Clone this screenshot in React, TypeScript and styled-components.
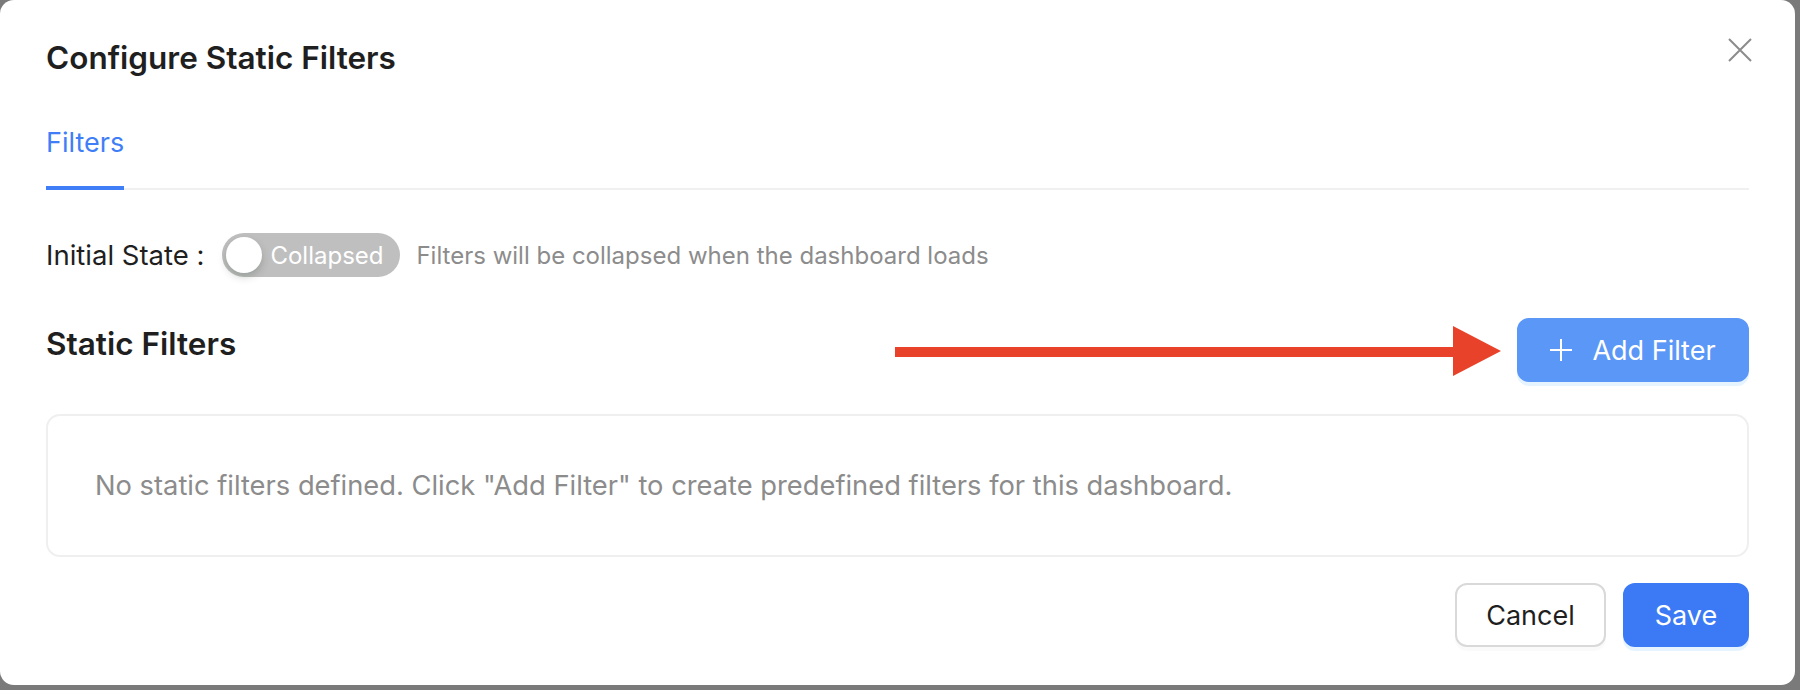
import styled, { createGlobalStyle } from "styled-components";

const GlobalStyle = createGlobalStyle`
  html, body {
    margin: 0;
    padding: 0;
    background: #7a7a7a;
    font-family: Inter, "Noto Sans", "Liberation Sans", sans-serif;
    overflow: hidden;
  }
  * {
    box-sizing: border-box;
  }
`;

const Modal = styled.section`
  position: relative;
  width: 1795px;
  height: 685px;
  background: #fff;
  border-radius: 14px;
  padding: 40px 46px 0 46px;
  display: flex;
  flex-direction: column;
`;

const Header = styled.header`
  display: flex;
  justify-content: space-between;
  align-items: flex-start;
`;

const Title = styled.h1`
  margin: 0;
  font-size: 31.5px;
  line-height: 36px;
  font-weight: 600;
  color: #1f1f1f;
`;

const CloseButton = styled.button`
  border: none;
  background: none;
  padding: 0;
  margin: -2px -3px 0 0;
  width: 24px;
  height: 24px;
  cursor: pointer;
  display: flex;
`;

const TabList = styled.div`
  display: flex;
  margin-top: 50px;
  border-bottom: 2px solid #f0f0f0;
`;

const Tab = styled.div<{ $active?: boolean }>`
  font-size: 27px;
  line-height: 33px;
  padding-bottom: 27px;
  margin-bottom: -2px;
  color: ${(p) => (p.$active ? "#3f7ef6" : "#1f1f1f")};
  border-bottom: 4px solid ${(p) => (p.$active ? "#3f7ef6" : "transparent")};
`;

const StateRow = styled.div`
  display: flex;
  align-items: center;
  margin-top: 43px;
  height: 44px;
`;

const Label = styled.span`
  font-size: 27.5px;
  color: #1f1f1f;
  margin-right: 18px;
  white-space: nowrap;
`;

const Switch = styled.button`
  position: relative;
  width: 178px;
  height: 44px;
  border-radius: 22px;
  border: none;
  background: #bfbfbf;
  padding: 0 18px 0 48px;
  display: flex;
  align-items: center;
  cursor: pointer;
  font-family: inherit;
  font-size: 24px;
  color: #fff;
  margin-right: 16px;
`;

const Knob = styled.span`
  position: absolute;
  left: 4px;
  top: 4px;
  width: 36px;
  height: 36px;
  border-radius: 50%;
  background: #fff;
  box-shadow: 0 4px 8px rgba(0, 35, 11, 0.2);
`;

const Hint = styled.span`
  font-size: 24px;
  color: #8c8c8c;
  white-space: nowrap;
`;

const SectionRow = styled.div`
  display: flex;
  justify-content: space-between;
  align-items: flex-start;
  margin-top: 41px;
`;

const SectionTitle = styled.h2`
  margin: 8px 0 0 0;
  font-size: 31.5px;
  line-height: 36px;
  font-weight: 600;
  color: #1f1f1f;
`;

const Button = styled.button<{ $variant?: "primary" | "soft" | "default" }>`
  height: 64px;
  border-radius: 12px;
  font-family: inherit;
  font-size: 27px;
  display: flex;
  align-items: center;
  justify-content: center;
  gap: 20px;
  cursor: pointer;
  padding: 0 32px;
  border: 2px solid
    ${(p) =>
      p.$variant === "primary"
        ? "#3c7af5"
        : p.$variant === "soft"
        ? "#5b97f7"
        : "#d9d9d9"};
  background: ${(p) =>
    p.$variant === "primary"
      ? "#3c7af5"
      : p.$variant === "soft"
      ? "#5b97f7"
      : "#fff"};
  color: ${(p) => (p.$variant === "default" ? "#1f1f1f" : "#fff")};
  box-shadow: 0 4px 0
    ${(p) =>
      p.$variant === "default"
        ? "rgba(0, 0, 0, 0.02)"
        : "rgba(5, 145, 255, 0.1)"};
`;

const AddButton = styled(Button)`
  width: 232px;
  padding: 0;
`;

const EmptyBox = styled.div`
  margin-top: 32px;
  height: 143px;
  border: 2px solid #efefef;
  border-radius: 14px;
  display: flex;
  align-items: center;
  padding-left: 47px;
  font-size: 27.3px;
  color: #8c8c8c;
`;

const Footer = styled.footer`
  display: flex;
  justify-content: flex-end;
  gap: 17px;
  margin-top: 26px;
`;

const Arrow = styled.svg`
  position: absolute;
  left: 895px;
  top: 326px;
`;

const App = () => {
  return (
    <>
      <GlobalStyle />
      <Modal>
        <Header>
          <Title>Configure Static Filters</Title>
          <CloseButton aria-label="Close">
            <svg width="24" height="24" viewBox="0 0 24 24">
              <path
                d="M1 1 L23 23 M23 1 L1 23"
                stroke="#8c8c8c"
                strokeWidth="2"
                fill="none"
              />
            </svg>
          </CloseButton>
        </Header>

        <TabList>
          <Tab $active>Filters</Tab>
        </TabList>

        <StateRow>
          <Label>Initial State :</Label>
          <Switch>
            <Knob />
            Collapsed
          </Switch>
          <Hint>Filters will be collapsed when the dashboard loads</Hint>
        </StateRow>

        <SectionRow>
          <SectionTitle>Static Filters</SectionTitle>
          <AddButton $variant="soft">
            <svg width="22" height="22" viewBox="0 0 22 22">
              <path d="M11 0 V22 M0 11 H22" stroke="#fff" strokeWidth="2" />
            </svg>
            Add Filter
          </AddButton>
        </SectionRow>

        <EmptyBox>
          No static filters defined. Click "Add Filter" to create predefined
          filters for this dashboard.
        </EmptyBox>

        <Footer>
          <Button $variant="default" style={{ width: 151 }}>
            Cancel
          </Button>
          <Button $variant="primary" style={{ width: 126 }}>
            Save
          </Button>
        </Footer>

        <Arrow width="606" height="50" viewBox="0 0 606 50">
          <rect x="0" y="21" width="560" height="10" fill="#e8432a" />
          <polygon points="558,0 606,25 558,50" fill="#e8432a" />
        </Arrow>
      </Modal>
    </>
  );
};

export default App;
